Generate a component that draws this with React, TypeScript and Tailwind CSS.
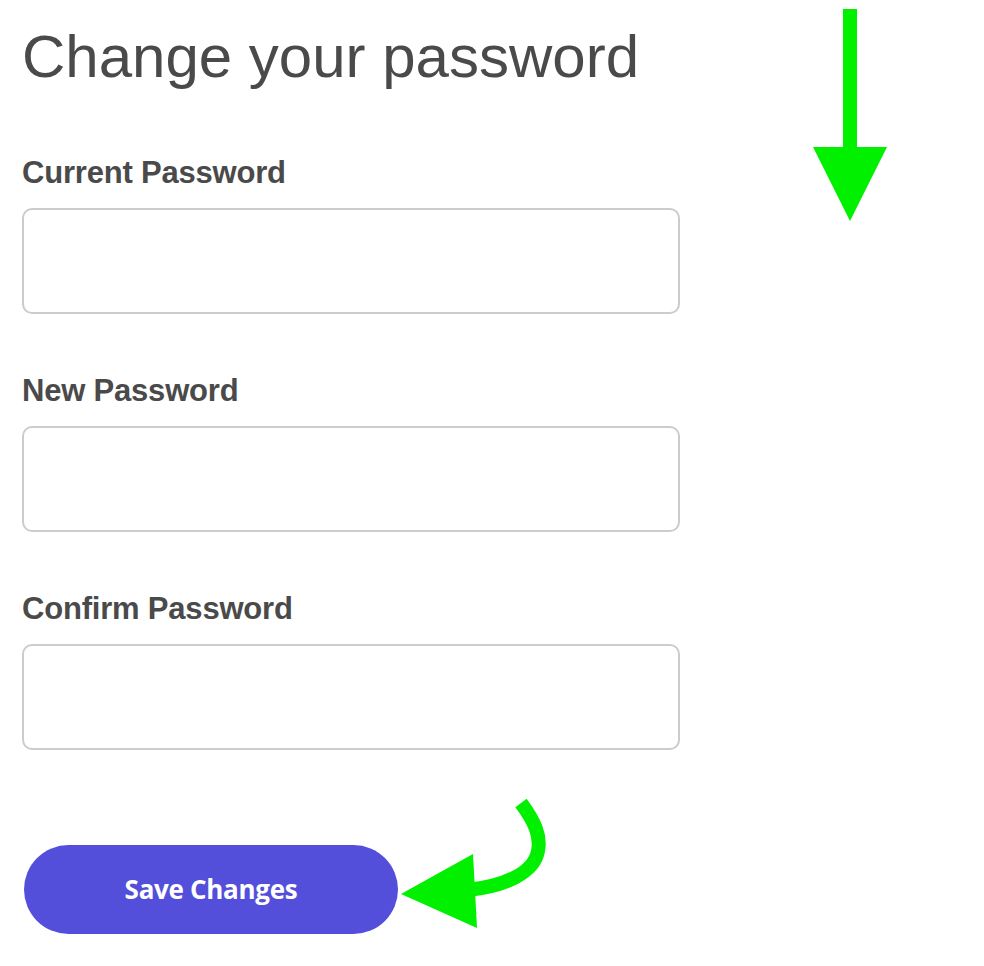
const fields = ["Current Password", "New Password", "Confirm Password"];

function Field({ label }: { label: string }) {
  return (
    <div className="flex flex-col">
      <label className="text-[31px] leading-[36px] font-bold text-[#4a4a4a] mb-[17px] tracking-[-0.2px]">
        {label}
      </label>
      <input
        type="password"
        className="w-[658px] h-[106px] border-2 border-[#cccccc] rounded-[10px] bg-white px-4 outline-none"
      />
    </div>
  );
}

function Arrows() {
  return (
    <svg
      className="absolute left-0 top-0 pointer-events-none"
      width="984"
      height="966"
      viewBox="0 0 984 966"
    >
      <rect x="843" y="9" width="14" height="140" fill="#00f000" />
      <polygon points="813,147 887,147 850,221" fill="#00f000" />
      <path
        d="M 521 803 C 535 822, 541 836, 538 851 C 534 873, 505 886, 468 890"
        fill="none"
        stroke="#00f000"
        strokeWidth="14"
      />
      <polygon points="401,894 473,854 477,928" fill="#00f000" />
    </svg>
  );
}

export default function App() {
  return (
    <div className="relative w-[984px] h-[966px] bg-white font-['Liberation_Sans',Arial,sans-serif]">
      <div className="flex flex-col px-[22px] pt-[27px]">
        <h1 className="text-[60px] leading-[60px] font-normal text-[#4a4a4a] mb-[68px]">
          Change your password
        </h1>
        <div className="flex flex-col gap-[59px]">
          {fields.map((f) => (
            <Field key={f} label={f} />
          ))}
        </div>
        <button className="mt-[95px] ml-[2px] w-[374px] h-[89px] rounded-full bg-[#534fdb] text-white text-[26px] font-bold font-['Open_Sans',sans-serif] tracking-[-0.3px]">
          Save Changes
        </button>
      </div>
      <Arrows />
    </div>
  );
}
